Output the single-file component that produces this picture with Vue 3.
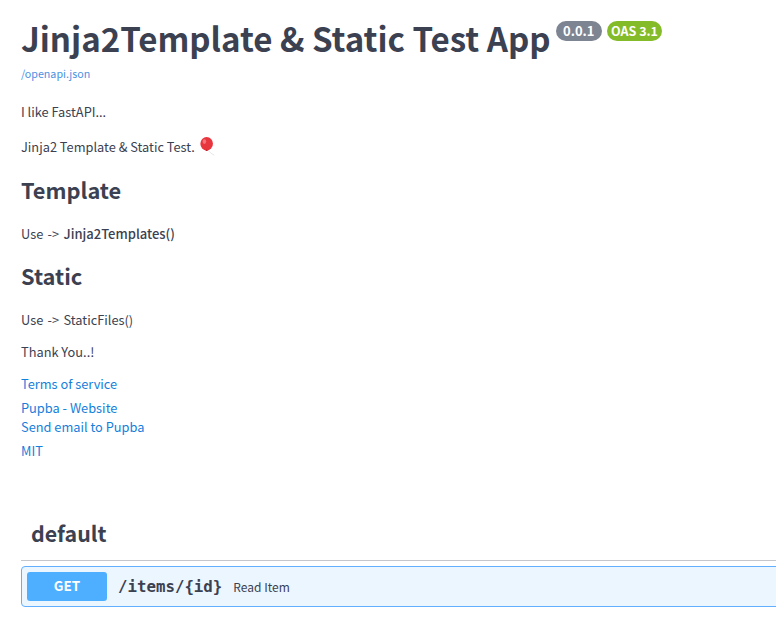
<script setup>
const links = ['Pupba - Website', 'Send email to Pupba']
</script>

<template>
  <div class="page">
    <section class="info">
      <div class="title-row">
        <h1 class="title">Jinja2Template &amp; Static Test App</h1>
        <div class="badges">
          <span class="badge grey">0.0.1</span>
          <span class="badge green">OAS 3.1</span>
        </div>
      </div>
      <a class="spec" href="#">/openapi.json</a>
      <div class="desc">
        <p class="first">I like FastAPI...</p>
        <p class="second">Jinja2 Template &amp; Static Test.
          <svg class="balloon" viewBox="0 0 20 22" width="18" height="20">
            <path d="M10 14 C12 17 13 18 17 20" fill="none" stroke="#e4e4e4" stroke-width="1"/>
            <ellipse cx="8.5" cy="7.5" rx="7" ry="7.5" fill="#e8363f"/>
            <path d="M7 15.5 L10 15.5 L8.5 13.5 Z" fill="#c81c26"/>
            <ellipse cx="6" cy="5" rx="2" ry="2.6" fill="#f5737a"/>
          </svg>
        </p>
        <h2 class="h-template">Template</h2>
        <p class="use">Use -&gt; <strong>Jinja2Templates()</strong></p>
        <h2 class="h-static">Static</h2>
        <p class="use">Use -&gt; StaticFiles()</p>
        <p class="thanks">Thank You..!</p>
      </div>
      <a class="link terms" href="#">Terms of service</a>
      <a class="link pupba" v-for="l in links" :key="l" href="#">{{ l }}</a>
      <a class="link mit" href="#">MIT</a>
    </section>
    <h3 class="tag">default</h3>
    <div class="op">
      <span class="method">GET</span>
      <span class="path">/items/{id}</span>
      <span class="summary">Read Item</span>
    </div>
  </div>
</template>

<style>
html, body { margin: 0; overflow: hidden; background: #fff; }
</style>

<style scoped>
.page {
  width: 800px;
  height: 635px;
  padding: 0 0 0 21px;
  box-sizing: border-box;
  font-family: "Noto Sans CJK KR", "Noto Sans", sans-serif;
  color: #3b4151;
  overflow: hidden;
}
.info { display: flex; flex-direction: column; align-items: flex-start; padding-top: 14px; }
.title-row { display: flex; align-items: flex-start; }
.title { margin: 0; font-size: 33.1px; line-height: 49px; font-weight: 700; white-space: nowrap; }
.badges { display: flex; gap: 5px; margin: 7px 0 0 5px; }
.badge {
  height: 20px; line-height: 19px; padding: 0 7.5px; border-radius: 10px;
  color: #fff; font-size: 13px; font-weight: 700;
}
.grey { background: #7d8492; }
.green { background: #84bb28; padding: 0 4px; font-size: 12.5px; }
.spec { font-size: 10.7px; line-height: 16px; color: #4990e2; text-decoration: none; margin-top: 3px; }
.desc p { margin: 0; font-size: 12.8px; line-height: 20px; }
.first { margin-top: 20px !important; }
.second { margin-top: 15px !important; display: flex; align-items: center; gap: 4px; }
h2 { margin: 0; font-size: 21.8px; font-weight: 700; line-height: 32px; }
.h-template { margin-top: 17px; }
.use { margin-top: 18px !important; word-spacing: 1.5px; }
strong { font-weight: 500; font-size: 13px; word-spacing: 0; }
.h-static { margin-top: 16px; }
.thanks { margin-top: 12px !important; }
.link { font-size: 12.8px; line-height: 19px; color: #1580dc; text-decoration: none; }
.terms { margin-top: 12px; }
.terms + .pupba { margin-top: 5px; }
.mit { margin-top: 5px; }
.tag {
  margin: 56px 0 0; padding: 0 0 11px 10px; font-size: 21.4px; line-height: 33px; font-weight: 700;
  border-bottom: 1px solid #c4c6cb;
}
.op {
  margin-top: 5px; height: 41px; box-sizing: border-box; display: flex; align-items: center;
  border: 1px solid #61affe; border-radius: 4px; background: #ecf6ff; padding-left: 5px;
}
.method {
  width: 80px; height: 29px; line-height: 27px; text-align: center; background: #4eaeff; color: #fff;
  font-size: 13.5px; font-weight: 700; border-radius: 3px;
}
.path { margin-left: 11px; font-family: "DejaVu Sans Mono", monospace; font-size: 15.75px; font-weight: 700; }
.summary { margin-left: 11px; font-size: 12px; color: #3b4151; }
</style>
